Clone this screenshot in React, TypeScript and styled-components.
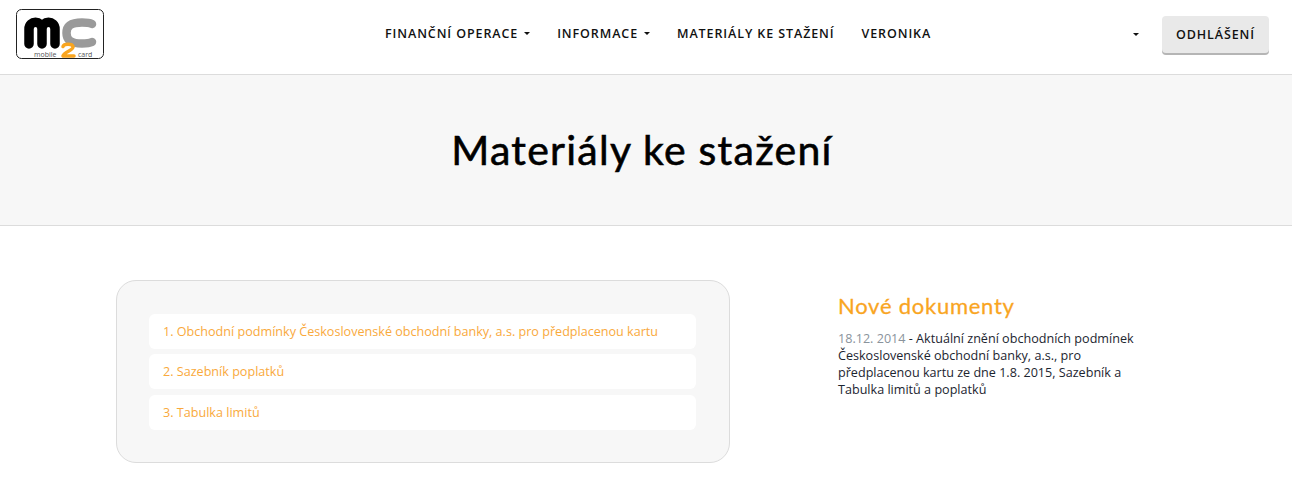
import React from 'react'
import styled, { createGlobalStyle } from 'styled-components'

const Global = createGlobalStyle`
    html, body {
        margin: 0;
        padding: 0;
        background: #fff;
        font-family: "Open Sans", "Liberation Sans", sans-serif;
    }
`

const Header = styled.header`
    box-sizing: border-box;
    height: 75px;
    display: flex;
    align-items: center;
    padding: 0 23px 6px 16px;
    border-bottom: 1px solid #dcdcdc;
`

const LogoBox = styled.svg`
    width: 90px;
    height: 52px;
    display: block;
    margin-top: 2px;
`

const Nav = styled.nav`
    display: flex;
    align-items: center;
    gap: 27px;
    margin-left: 279px;
    margin-top: -1px;
    flex: 1;
`

const NavItem = styled.a`
    display: flex;
    align-items: center;
    gap: 6px;
    font-size: 12.5px;
    font-weight: 600;
    letter-spacing: 0.9px;
    line-height: 18px;
    color: #111;
    white-space: nowrap;
`

const Caret = styled.span`
    display: inline-block;
    width: 0;
    height: 0;
    border-left: 3px solid transparent;
    border-right: 3px solid transparent;
    border-top: 3px solid #111;
`

const UserMenu = styled.div`
    display: flex;
    align-items: center;
    gap: 23px;
`

const LogoutButton = styled.button`
    width: 107px;
    height: 37px;
    padding: 0;
    border: 0;
    border-radius: 4px;
    background: #e9e9e9;
    box-shadow: 0 2px 0 #b5b5b5;
    font-family: inherit;
    font-size: 12.5px;
    font-weight: 600;
    letter-spacing: 0.9px;
    color: #111;
`

const Hero = styled.section`
    height: 150px;
    padding-right: 8px;
    display: flex;
    align-items: center;
    justify-content: center;
    background: #f7f7f7;
    border-bottom: 1px solid #dcdcdc;
`

const Title = styled.h1`
    margin: 0;
    font-family: "Lato", "Noto Sans", sans-serif;
    font-size: 41px;
    font-weight: 400;
    letter-spacing: 1.25px;
    line-height: 50px;
    color: #000;
    -webkit-text-stroke: 0.6px #000;
`

const Main = styled.main`
    display: flex;
    align-items: flex-start;
    padding: 54px 0 28px 116px;
    gap: 108px;
`

const Card = styled.div`
    box-sizing: border-box;
    width: 614px;
    height: 183px;
    padding: 33px 33px 0 32px;
    display: flex;
    flex-direction: column;
    gap: 5.4px;
    background: #f7f7f7;
    border: 1px solid #dcdcdc;
    border-radius: 20px;
`

const DocLink = styled.a`
    height: 35px;
    padding: 0 14px;
    display: flex;
    align-items: center;
    background: #fff;
    border-radius: 6px;
    font-size: 12.6px;
    color: #f9a93c;
`

const Side = styled.aside`
    width: 300px;
`

const SideTitle = styled.h2`
    margin: 12px 0 10px;
    font-family: "Lato", "Noto Sans", sans-serif;
    font-size: 22px;
    font-weight: 400;
    letter-spacing: 0.75px;
    line-height: 28px;
    color: #f9a51f;
    -webkit-text-stroke: 0.3px #f9a51f;
`

const NewsText = styled.p`
    margin: 0;
    font-size: 12.6px;
    line-height: 17px;
    color: #1c2530;
`

const NewsDate = styled.span`
    color: #8a939c;
`

const Logo = () => (
    <LogoBox viewBox="0 0 90 52">
        <rect x="0.5" y="0.5" width="87" height="49" rx="5" fill="#fff" stroke="#222" />
        <path d="M13 35V20c0-9 13-9 13 0v15M26 20c0-9 13-9 13 0v15" fill="none" stroke="#000" strokeWidth="9.5" strokeLinecap="round" />
        <path d="M76 15C73 13.5 70 13.5 66 13.5 55 13.5 50.5 17 50.5 24 50.5 31 55 34.5 66 34.5 70 34.5 73 34.5 76 33" fill="none" stroke="#9a9a9a" strokeWidth="8.5" strokeLinecap="round" />
        <path d="M47 37.5c1-3 9-3 10 0 1 4-9 5-10 9.5h11" fill="none" stroke="#f9a51f" strokeWidth="3.5" strokeLinecap="round" strokeLinejoin="round" />
        <text x="18" y="48" fontSize="7" fontFamily="Open Sans" fill="#555">mobile</text>
        <text x="62" y="48" fontSize="7" fontFamily="Open Sans" fill="#555">card</text>
    </LogoBox>
)

export default function App() {
    return (
        <>
            <Global />
            <Header>
                <Logo />
                <Nav>
                    <NavItem>FINANČNÍ OPERACE <Caret /></NavItem>
                    <NavItem>INFORMACE <Caret /></NavItem>
                    <NavItem>MATERIÁLY KE STAŽENÍ</NavItem>
                    <NavItem>VERONIKA</NavItem>
                </Nav>
                <UserMenu>
                    <Caret />
                    <LogoutButton>ODHLÁŠENÍ</LogoutButton>
                </UserMenu>
            </Header>
            <Hero>
                <Title>Materiály ke stažení</Title>
            </Hero>
            <Main>
                <Card>
                    <DocLink>1. Obchodní podmínky Československé obchodní banky, a.s. pro předplacenou kartu</DocLink>
                    <DocLink>2. Sazebník poplatků</DocLink>
                    <DocLink>3. Tabulka limitů</DocLink>
                </Card>
                <Side>
                    <SideTitle>Nové dokumenty</SideTitle>
                    <NewsText>
                        <NewsDate>18.12. 2014</NewsDate> - Aktuální znění obchodních podmínek Československé obchodní banky, a.s., pro předplacenou kartu ze dne 1.8. 2015, Sazebník a Tabulka limitů a poplatků
                    </NewsText>
                </Side>
            </Main>
        </>
    )
}
